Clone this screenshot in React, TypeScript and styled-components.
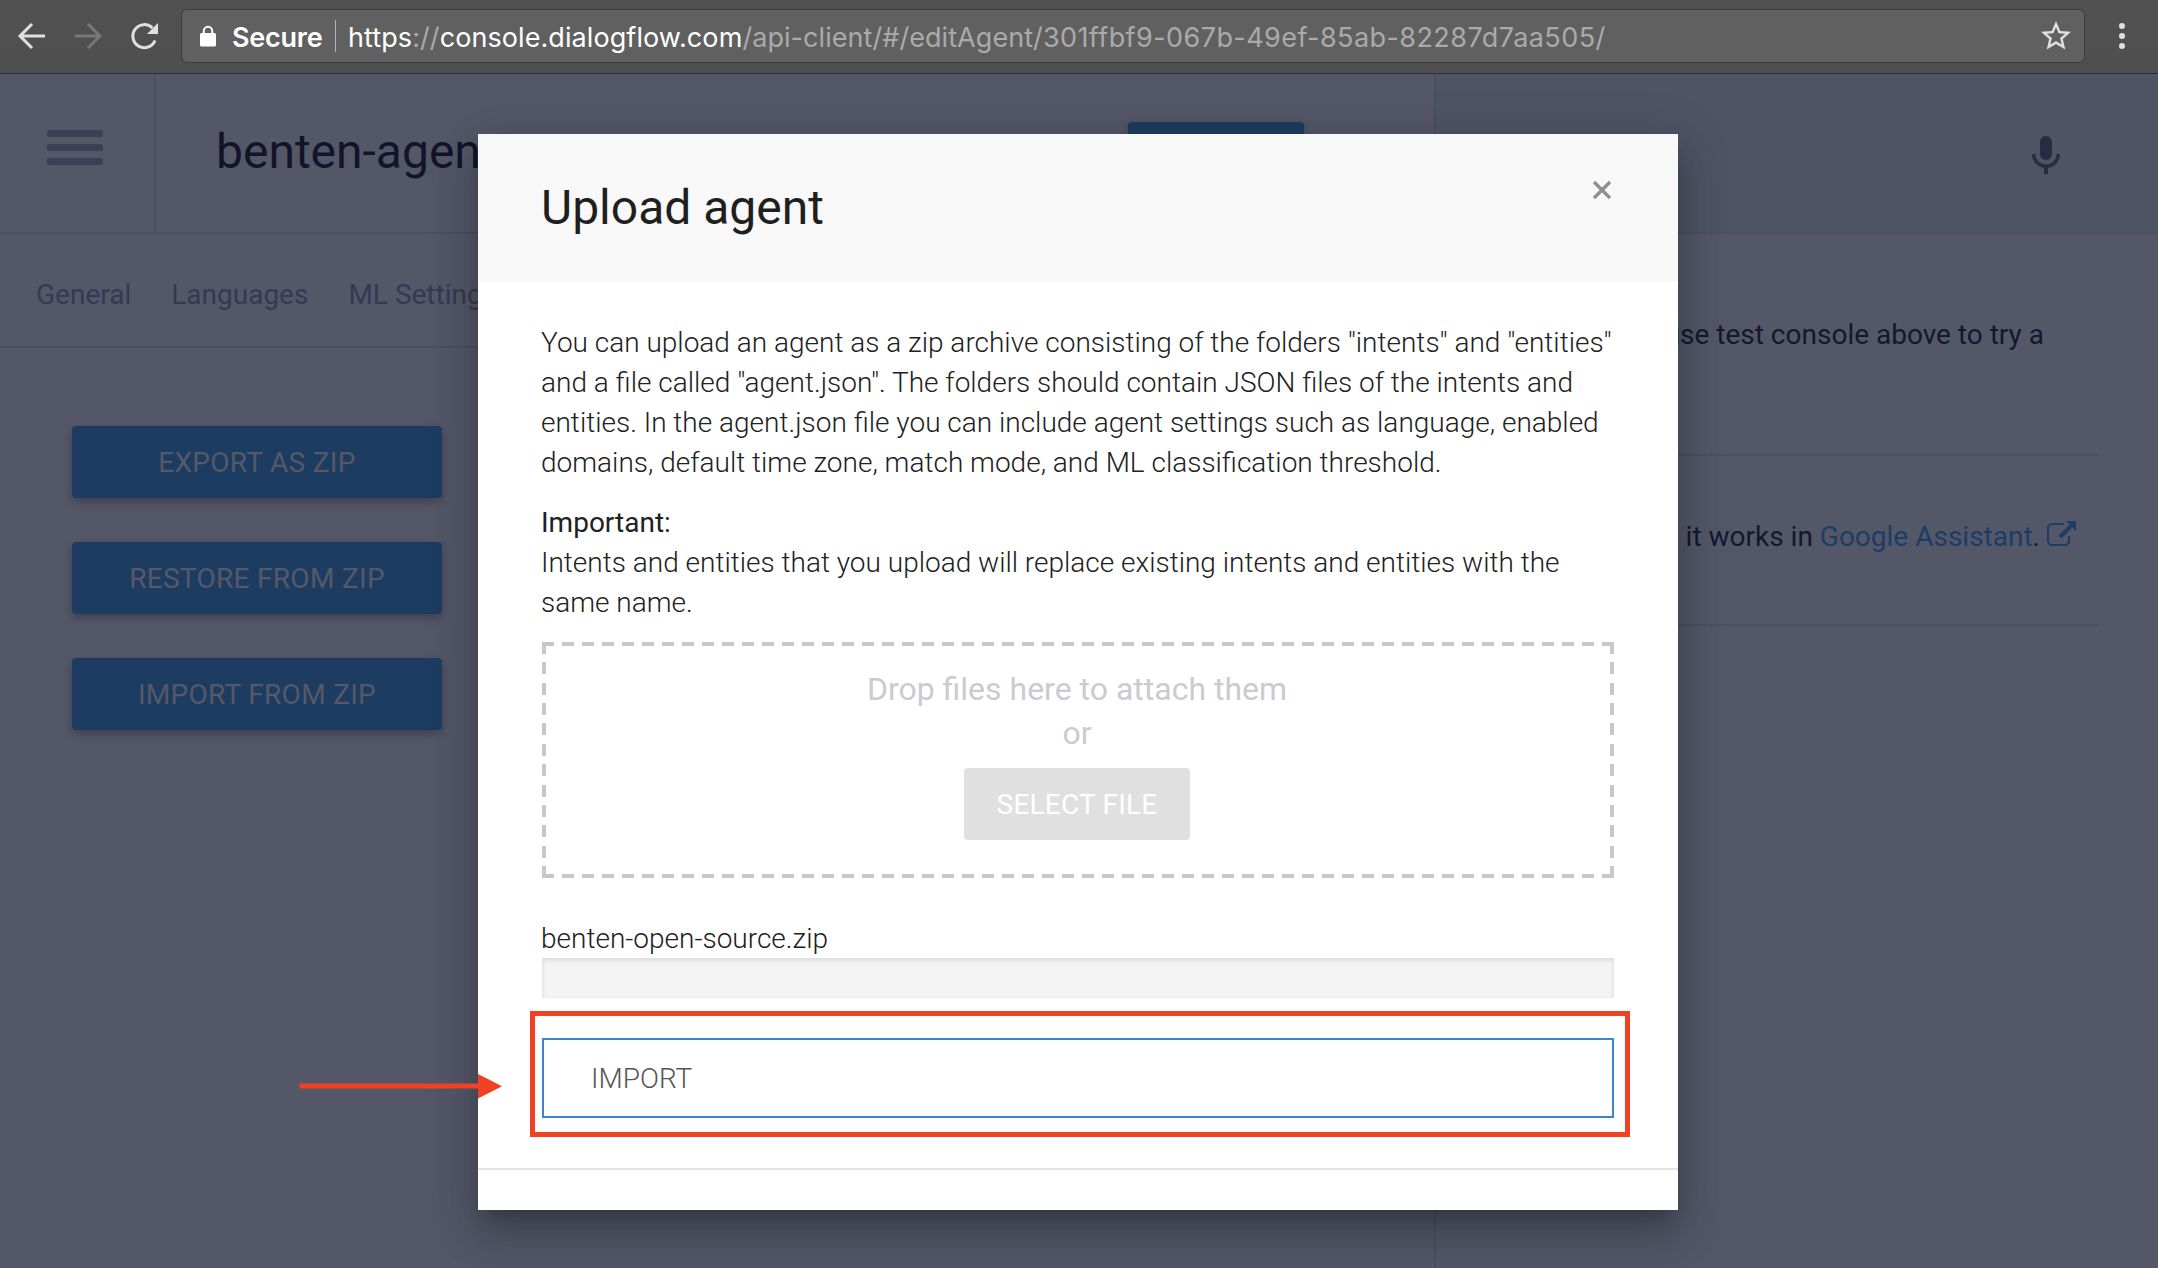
import React from "react";
import styled, { createGlobalStyle } from "styled-components";

const GlobalStyle = createGlobalStyle`
  *, *::before, *::after { box-sizing: border-box; }
  html, body { margin: 0; padding: 0; }
  body {
    background: #545768;
    font-family: Roboto, "Liberation Sans", sans-serif;
    overflow: hidden;
  }
  p, h1, h2 { margin: 0; font-weight: 400; }
  button { font: inherit; border: 0; }
  svg { display: block; flex: none; }
`;

const Window = styled.div`
  position: relative;
  width: 2158px;
  height: 1268px;
  display: flex;
  flex-direction: column;
  overflow: hidden;
`;

const Toolbar = styled.header`
  height: 74px;
  flex: none;
  display: flex;
  align-items: flex-start;
  padding: 9px 0 0 16px;
  background: linear-gradient(#515151, #4f4f4f);
  border-bottom: 1px solid #2c2c2f;
`;

const NavIcons = styled.nav`
  display: flex;
  align-items: center;
  width: 165px;
  height: 54px;
  gap: 24px;
`;

const Omnibox = styled.div`
  width: 1904px;
  height: 54px;
  display: flex;
  align-items: center;
  padding: 0 10px 0 18px;
  border: 1px solid #3b3b3b;
  border-radius: 6px;
  background: #606060;
  font-family: Inter, "Liberation Sans", sans-serif;
  font-size: 27px;
  color: #fff;
  white-space: pre;
`;

const Secure = styled.span`
  width: 101px;
  margin-left: 16px;
  padding-top: 2px;
  font-weight: 600;
  letter-spacing: -0.25px;
`;

const Divider = styled.i`
  width: 1px;
  height: 32px;
  margin-left: 2px;
  background: #b5b5b5;
`;

const Url = styled.span`
  flex: 1;
  margin-left: 12px;
  padding-top: 2px;
`;

const UrlPart = styled.span<{ $dim?: boolean; $track: number }>`
  color: ${(p) => (p.$dim ? "#aaaaaa" : "#fff")};
  letter-spacing: ${(p) => p.$track}px;
`;

const MoreButton = styled.div`
  display: flex;
  flex-direction: column;
  gap: 4px;
  margin: 14px 0 0 34px;
  i {
    width: 6px;
    height: 6px;
    border-radius: 50%;
    background: #e0e0e0;
  }
`;

const Page = styled.main`
  flex: 1;
  display: grid;
  grid-template-columns: 1434px 1fr;
  background: #545768;
`;

const MainColumn = styled.section`
  display: flex;
  flex-direction: column;
`;

const AgentHeader = styled.div`
  height: 160px;
  display: flex;
  border-bottom: 2px solid #4c4f60;
`;

const MenuCell = styled.div`
  width: 156px;
  display: flex;
  flex-direction: column;
  gap: 7px;
  padding: 56px 0 0 47px;
  border-right: 2px solid #4c4f60;
  i {
    width: 56px;
    height: 7px;
    border-radius: 2px;
    background: #3c4055;
  }
`;

const AgentName = styled.h1`
  width: 912px;
  padding: 50px 0 0 60px;
  font-size: 48px;
  line-height: 56px;
  color: #12152a;
`;

const SaveButton = styled.button`
  width: 176px;
  height: 72px;
  margin: 48px 0 0 60px;
  border-radius: 4px;
  background: #1c3d61;
  box-shadow: 0 4px 10px rgba(0, 0, 0, 0.22);
`;

const Tabs = styled.nav`
  height: 114px;
  display: flex;
  gap: 40px;
  padding: 44px 0 0 36px;
  border-bottom: 2px solid #4c4f60;
  font-size: 28px;
  line-height: 33px;
  color: #343a52;
`;

const Actions = styled.div`
  display: flex;
  flex-direction: column;
  gap: 44px;
  padding: 78px 0 0 72px;
`;

const ActionButton = styled.button`
  width: 370px;
  height: 72px;
  padding: 0;
  border-radius: 4px;
  background: #1c3d61;
  color: #565868;
  font-size: 28px;
  letter-spacing: 0.3px;
  box-shadow: 0 4px 10px rgba(0, 0, 0, 0.26);
`;

const ConsoleColumn = styled.aside`
  border-left: 2px solid #4c4f60;
`;

const ConsoleHeader = styled.div`
  height: 160px;
  display: flex;
  justify-content: flex-end;
  padding: 62px 98px 0 0;
  background: #4e5464;
  border-bottom: 2px solid #4c4f60;
`;

const ConsoleNote = styled.div<{ $height: number; $top: number; $end: number }>`
  height: ${(p) => p.$height}px;
  margin: 0 60px;
  padding: ${(p) => p.$top}px ${(p) => p.$end}px 0 0;
  display: flex;
  justify-content: flex-end;
  border-bottom: 2px solid #4c4f60;
  font-size: 28px;
  line-height: 40px;
  color: #14182e;
  white-space: pre;
  a { color: #1c3d66; }
  svg { margin: 4px 0 0 7px; }
`;

const Overlay = styled.div`
  position: absolute;
  inset: 74px 0 0 0;
  overflow: hidden;
  padding: 60px 0 0 478px;
`;

const Dialog = styled.div`
  width: 1200px;
  height: 1076px;
  background: #fff;
  box-shadow: 0 14px 16px -8px rgba(0, 0, 0, 0.2),
    0 26px 38px 4px rgba(0, 0, 0, 0.14), 0 10px 48px 8px rgba(0, 0, 0, 0.12);
`;

const DialogHeader = styled.div`
  height: 148px;
  display: flex;
  justify-content: space-between;
  padding: 46px 66.5px 0 63px;
  background: #f8f8f8;
`;

const DialogTitle = styled.h2`
  font-size: 48px;
  line-height: 56px;
  color: #1f1f1f;
`;

const DialogBody = styled.div`
  height: 888px;
  padding: 41px 64px 0;
  border-bottom: 2px solid #e4e4e4;
`;

const Copy = styled.p`
  margin-left: -1px;
  font-size: 28px;
  font-weight: 300;
  line-height: 40px;
  color: #212121;
  white-space: pre;
  & + & { margin-top: 20px; }
  strong { font-weight: 400; }
`;

const dashH = "repeating-linear-gradient(90deg, #c8c8c8 0 12px, transparent 12px 20px)";
const dashV = "repeating-linear-gradient(180deg, #c8c8c8 0 12px, transparent 12px 20.364px)";

const DropZone = styled.div`
  height: 236px;
  margin-top: 19px;
  padding: 25px 2px 0 0;
  display: flex;
  flex-direction: column;
  align-items: center;
  background: ${dashH} top / 100% 4px no-repeat, ${dashH} bottom / 100% 4px no-repeat,
    ${dashV} left / 4px 100% no-repeat, ${dashV} right / 4px 100% no-repeat;
  font-size: 32px;
  line-height: 44px;
  color: #cbcad2;
`;

const SelectButton = styled.button`
  width: 226px;
  height: 72px;
  margin-top: 13px;
  padding: 1px 0 0;
  border-radius: 4px;
  background: #e0e0e0;
  color: #fff;
  font-size: 28px;
  letter-spacing: 0.2px;
`;

const FileName = styled.p`
  margin: 41px 0 -1px -1px;
  font-size: 28px;
  font-weight: 300;
  line-height: 40px;
  color: #212121;
`;

const Progress = styled.div`
  height: 40px;
  background: #f4f4f4;
  box-shadow: inset 0 2px 5px rgba(0, 0, 0, 0.12);
`;

const Highlight = styled.div`
  width: 1100px;
  height: 126px;
  margin: 13px 0 0 -12px;
  padding: 22px 11px 0 7px;
  border: 5px solid #ef4123;
`;

const ImportButton = styled.div`
  width: 1072px;
  height: 80px;
  padding-left: 47px;
  border: 2px solid #3a86d4;
  background: #fff;
  font-size: 28px;
  font-weight: 300;
  line-height: 77px;
  color: #555;
`;

const Arrow = styled.svg`
  position: absolute;
  left: 299px;
  top: 1073px;
`;

export default function App() {
  return (
    <Window>
      <GlobalStyle />
      <Toolbar>
        <NavIcons>
          <svg width="32" height="32" viewBox="0 0 32 32" fill="none" stroke="#e0e0e0" strokeWidth="3">
            <path d="M29 16H4.500M16 4L4 16l12 12" />
          </svg>
          <svg width="32" height="32" viewBox="0 0 32 32" fill="none" stroke="#777" strokeWidth="3">
            <path d="M3 16h24.500M16 4l12 12-12 12" />
          </svg>
          <svg width="32" height="32" viewBox="0 0 32 32">
            <path d="M27 20.500A11.500 11.500 0 1 1 24.500 8" fill="none" stroke="#e0e0e0" strokeWidth="3" />
            <path d="M30 3v11H19z" fill="#e0e0e0" />
          </svg>
        </NavIcons>
        <Omnibox>
          <svg width="16" height="22" viewBox="0 0 16 22">
            <rect x="0" y="8" width="16" height="13.500" rx="1.500" fill="#fff" />
            <path d="M3.800 9V6a4.200 4.200 0 0 1 8.400 0v3" fill="none" stroke="#fff" strokeWidth="2" />
          </svg>
          <Secure>Secure</Secure>
          <Divider />
          <Url>
            <UrlPart $track={0.08}>https</UrlPart>
            <UrlPart $dim $track={0.08}>://</UrlPart>
            <UrlPart $track={0.08}>console.dialogflow.com</UrlPart>
            <UrlPart $dim $track={0.06}>/api-client/#/editAgent/</UrlPart>
            <UrlPart $dim $track={0.43}>301ffbf9-067b-49ef-85ab-82287d7aa505/</UrlPart>
          </Url>
          <svg width="36" height="36" viewBox="0 0 24 24" fill="#e0e0e0">
            <path d="M22 9.240l-7.190-.62L12 2 9.190 8.630 2 9.240l5.460 4.730L5.820 21 12 17.270 18.180 21l-1.630-7.030L22 9.240zM12 15.400l-3.760 2.270 1-4.280-3.320-2.880 4.380-.38L12 6.100l1.710 4.040 4.380.38-3.320 2.880 1 4.280L12 15.400z" />
          </svg>
        </Omnibox>
        <MoreButton>
          <i />
          <i />
          <i />
        </MoreButton>
      </Toolbar>

      <Page>
        <MainColumn>
          <AgentHeader>
            <MenuCell>
              <i />
              <i />
              <i />
            </MenuCell>
            <AgentName>benten-agent</AgentName>
            <SaveButton aria-label="Save" />
          </AgentHeader>
          <Tabs>
            <span>General</span>
            <span>Languages</span>
            <span>ML Settings</span>
          </Tabs>
          <Actions>
            <ActionButton>EXPORT AS ZIP</ActionButton>
            <ActionButton>RESTORE FROM ZIP</ActionButton>
            <ActionButton>IMPORT FROM ZIP</ActionButton>
          </Actions>
        </MainColumn>
        <ConsoleColumn>
          <ConsoleHeader>
            <svg width="28" height="38" viewBox="0 0 28 38">
              <rect x="8" y="0" width="12" height="24" rx="6" fill="#282c40" />
              <path d="M1.700 18a12.300 12.300 0 0 0 24.600 0" fill="none" stroke="#282c40" strokeWidth="3.400" />
              <path d="M14 30v8" stroke="#282c40" strokeWidth="4" />
            </svg>
          </ConsoleHeader>
          <ConsoleNote $height={222} $top={81} $end={54}>use test console above to try a</ConsoleNote>
          <ConsoleNote $height={170} $top={61} $end={21}>
            how it works in <a>Google Assistant</a>.
            <svg width="30" height="26" viewBox="0 0 30 26">
              <path d="M17 3H5a4 4 0 0 0-4 4v13a4 4 0 0 0 4 4h13a4 4 0 0 0 4-4v-5" fill="none" stroke="#1c3d66" strokeWidth="2.200" />
              <path d="M13 16L25 4" stroke="#1c3d66" strokeWidth="4" />
              <path d="M19 0h10v10z" fill="#1c3d66" />
            </svg>
          </ConsoleNote>
        </ConsoleColumn>
      </Page>

      <Overlay>
        <Dialog>
          <DialogHeader>
            <DialogTitle>Upload agent</DialogTitle>
            <svg width="20" height="20" viewBox="0 0 20 20" stroke="#8e8e8e" strokeWidth="3.200">
              <path d="M2 2l16 16M18 2L2 18" />
            </svg>
          </DialogHeader>
          <DialogBody>
            <Copy>
              {'You can upload an agent as a zip archive consisting of the folders "intents" and "entities"\nand a file called "agent.json". The folders should contain JSON files of the intents and\nentities. In the agent.json file you can include agent settings such as language, enabled\ndomains, default time zone, match mode, and ML classification threshold.'}
            </Copy>
            <Copy>
              <strong>Important:</strong>
              {"\nIntents and entities that you upload will replace existing intents and entities with the\nsame name."}
            </Copy>
            <DropZone>
              <span>Drop files here to attach them</span>
              <span>or</span>
              <SelectButton>SELECT FILE</SelectButton>
            </DropZone>
            <FileName>benten-open-source.zip</FileName>
            <Progress />
            <Highlight>
              <ImportButton>IMPORT</ImportButton>
            </Highlight>
          </DialogBody>
        </Dialog>
      </Overlay>

      <Arrow width="206" height="26" viewBox="0 0 206 26">
        <path d="M0.500 13H182" stroke="#ef4123" strokeWidth="5" />
        <path d="M179 1l24 12.200L179 25.500z" fill="#ef4123" />
      </Arrow>
    </Window>
  );
}
